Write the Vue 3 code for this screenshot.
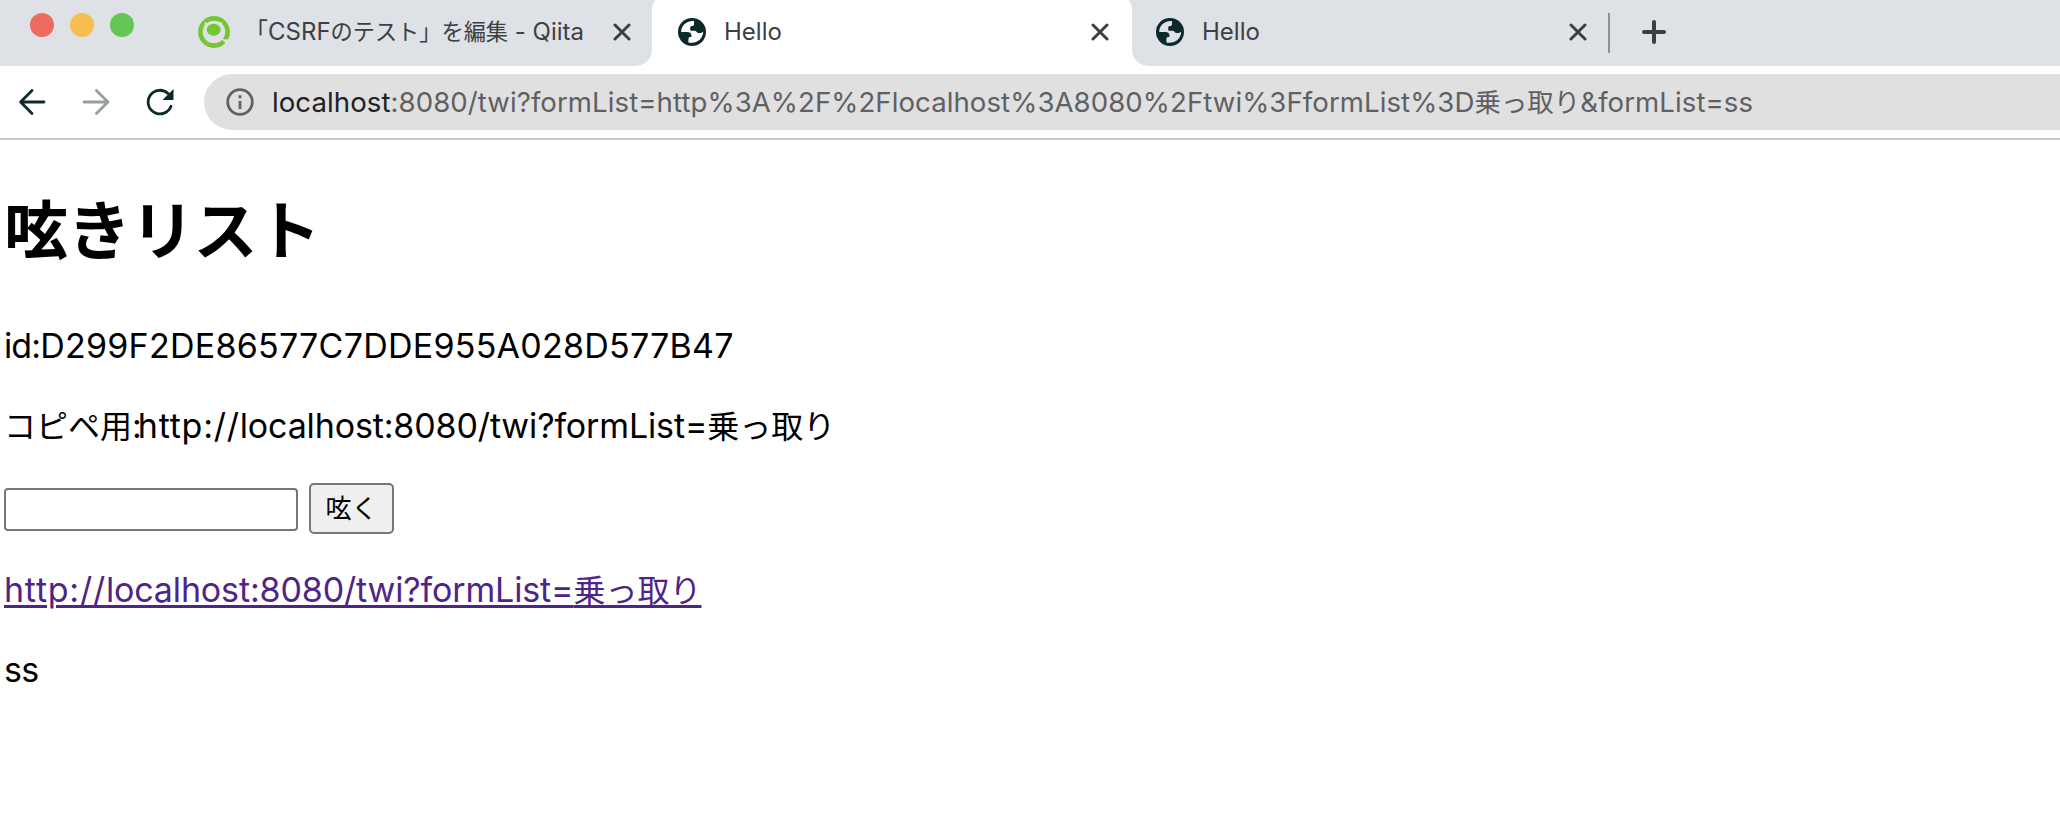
<script setup>
import { ref } from 'vue'

const tabs = ref([
  { id: 1, icon: 'qiita', active: false },
  { id: 2, icon: 'globe', title: 'Hello', active: true },
  { id: 3, icon: 'globe', title: 'Hello', active: false },
])

const sessionId = 'D299F2DE86577C7DDE955A028D577B47'
const scheme = 'http://'
const path = 'localhost:8080/twi?formList='
const word = '乗っ取り'
const tweet = ref('')
</script>

<template>
  <div class="window">
    <div class="tab-bar">
      <div class="lights">
        <span class="light red"></span>
        <span class="light yellow"></span>
        <span class="light green"></span>
      </div>
      <div v-for="tab in tabs" :key="tab.id" class="tab" :class="[tab.icon, { active: tab.active }]">
        <svg v-if="tab.icon === 'qiita'" class="favicon" width="32" height="32" viewBox="0 0 32 32">
          <circle cx="16" cy="16" r="13.6" fill="none" stroke="#76c533" stroke-width="4.6" />
          <path d="M23.4 22.4L26.2 23.2L32 23.6L32 27L28.4 27.4L25.2 25Z" fill="#dee1e6" />
          <path d="M7 5.4L10.4 8.2Q16 5.6 21 8.2L24 5.4L24.6 11.4H6.4Z" fill="#dee1e6" />
          <ellipse cx="15.7" cy="13.8" rx="7" ry="6.1" fill="#76c533" />
        </svg>
        <svg v-else class="favicon" width="28" height="28" viewBox="0 0 28 28">
          <circle cx="14" cy="14" r="14" fill="#0d2a2b" />
          <path class="land" d="M16 3C8.8 2.2 3 7.5 3.2 14H9.2C11.8 14 13.4 15 13.4 17.6V19H11.6Q10.4 19.4 10.4 21V24.4C17.5 26.4 25.2 21.5 25.2 13.6C23.6 15.2 21.5 15.4 19.6 14.8C18.4 14.4 18.4 12.8 16.4 12.8H13.2Q12.2 12.6 12.2 11.4V9.6Q12.2 8 13.8 8H14.6Q16 7.8 16 6.4Z" />
        </svg>
        <span v-if="tab.title" class="tab-title">{{ tab.title }}</span>
        <span v-else class="tab-title"><span class="kagi">「</span>CSRF<span class="jp">のテスト」を編集</span><span class="site"> - Qiita</span></span>
        <svg class="close" width="18" height="18" viewBox="0 0 18 18">
          <path d="M2 2L16 16M16 2L2 16" />
        </svg>
      </div>
      <div class="divider"></div>
      <svg class="plus" width="26" height="26" viewBox="0 0 26 26">
        <path d="M13 3V23M3 13H23" />
      </svg>
    </div>

    <div class="toolbar">
      <svg class="nav" width="28" height="28" viewBox="0 0 28 28">
        <path d="M26 14H3M14 2.6L2.6 14L14 25.4" />
      </svg>
      <svg class="nav forward" width="28" height="28" viewBox="0 0 28 28">
        <path d="M2 14H26M14.4 2.6L26 14L14.4 25.4" />
      </svg>
      <svg class="nav reload" width="28" height="28" viewBox="0 0 28 28">
        <path d="M25 18.2A11.8 11.8 0 1 1 22 5.4" />
        <path class="tip" d="M27.5 1V12H16.5Z" />
      </svg>
      <div class="omnibox">
        <svg class="info" width="28" height="28" viewBox="0 0 28 28">
          <circle cx="14" cy="14" r="12.3" />
          <path d="M14 13V21M14 7.2V10.2" />
        </svg>
        <span class="url"><span class="host">localhost</span>:8080/twi?formList=http%3A%2F%2Flocalhost%3A8080%2Ftwi%3FformList%3D<span class="jp">{{ word }}</span>&amp;formList=ss</span>
      </div>
    </div>

    <div class="page">
      <h1>呟きリスト</h1>
      <p><span class="label">id:</span><span class="session">{{ sessionId }}</span></p>
      <p><span class="jp">コピペ用</span><span class="colon">:</span><span class="scheme">{{ scheme }}</span><span class="path">{{ path }}</span><span class="jp">{{ word }}</span></p>
      <form @submit.prevent>
        <input v-model="tweet" type="text" />
        <button type="submit">呟く</button>
      </form>
      <p><a href="#"><span class="scheme">{{ scheme }}</span><span class="path">{{ path }}</span><span class="jp">{{ word }}</span></a></p>
      <p class="tweet">ss</p>
    </div>
  </div>
</template>

<style>
body {
  margin: 0;
  overflow: hidden;
}
</style>

<style scoped>
.window {
  height: 820px;
  overflow: hidden;
  background: #fff;
  font-family: Inter, "Noto Sans CJK JP", sans-serif;
}
.tab-bar {
  display: flex;
  align-items: center;
  height: 66px;
  background: #dee1e6;
}
.lights {
  display: flex;
  gap: 16px;
  width: 144px;
  padding-left: 30px;
  margin-bottom: 16px;
}
.light {
  width: 24px;
  height: 24px;
  border-radius: 50%;
}
.red {
  background: #ed6b60;
}
.yellow {
  background: #f5be4f;
}
.green {
  background: #62c554;
}
.tab {
  box-sizing: border-box;
  display: flex;
  align-items: center;
  width: 478px;
  height: 66px;
  padding: 0 23px 2px 24px;
  color: #3c4043;
  font-size: 24px;
}
.tab.active {
  position: relative;
  width: 480px;
  height: 72px;
  margin-top: -6px;
  padding: 4px 23px 0 26px;
  border-radius: 16px 16px 0 0;
  background: #fff;
}
.tab.active::before,
.tab.active::after {
  content: "";
  position: absolute;
  bottom: 0;
  width: 16px;
  height: 16px;
}
.tab.active::before {
  left: -16px;
  background: radial-gradient(circle at 0 0, transparent 15.5px, #fff 16px);
}
.tab.active::after {
  right: -16px;
  background: radial-gradient(circle at 100% 0, transparent 15.5px, #fff 16px);
}
.tab.qiita {
  padding-right: 21px;
}
.favicon {
  flex: none;
}
.land {
  fill: #fff;
}
.tab:not(.active) .land {
  fill: #dee1e6;
}
.tab-title {
  margin-left: 18px;
  line-height: 40px;
  white-space: nowrap;
}
.qiita .tab-title {
  margin-left: 26px;
}
.kagi {
  margin-left: -12px;
}
.tab-title .jp {
  font-size: 22.2px;
}
.close {
  flex: none;
  margin-left: auto;
}
.close path,
.plus path {
  fill: none;
  stroke: #3c4043;
  stroke-width: 3;
  stroke-linecap: round;
}
.plus path {
  stroke-width: 4;
}
.divider {
  width: 2px;
  height: 40px;
  margin-left: -2px;
  background: #8c9094;
}
.plus {
  margin: 0 0 2px 31px;
}
.toolbar {
  display: flex;
  align-items: center;
  height: 72px;
  padding-left: 18px;
  border-bottom: 2px solid #c5cccb;
}
.nav {
  flex: none;
  margin-right: 36px;
}
.nav path {
  fill: none;
  stroke: #0d2a2b;
  stroke-width: 2.8;
  stroke-linecap: round;
  stroke-linejoin: round;
}
.nav.forward path {
  stroke: #94a0a0;
}
.nav.reload {
  margin-right: 30px;
}
.nav.reload .tip {
  fill: #0d2a2b;
  stroke: none;
}
.omnibox {
  display: flex;
  flex: 1;
  align-items: center;
  height: 56px;
  padding-left: 22px;
  border-radius: 28px 0 0 28px;
  background: #e0e0e0;
}
.info {
  flex: none;
  fill: none;
  stroke: #5f6368;
  stroke-width: 2.8;
}
.url {
  margin-left: 18px;
  color: #5f6063;
  font-size: 27.6px;
  line-height: 40px;
  letter-spacing: 0.07px;
  white-space: nowrap;
}
.url .jp {
  font-size: 26.4px;
}
.host {
  color: #202124;
}
.page {
  padding: 0 4px;
  color: #000;
  font-size: 34px;
}
.page .jp {
  font-size: 32px;
  line-height: 1;
}
h1 {
  margin: 43px 0;
  font-size: 64px;
  line-height: 96px;
  letter-spacing: -0.8px;
}
p {
  height: 48px;
  margin: 32px 0;
  line-height: 48px;
  white-space: nowrap;
}
h1 + p {
  margin-top: 0;
}
.label {
  letter-spacing: -0.9px;
}
.session {
  letter-spacing: 0.25px;
}
.colon {
  letter-spacing: -4px;
}
.scheme {
  letter-spacing: 0.75px;
}
.path {
  letter-spacing: -0.14px;
}
.tweet {
  letter-spacing: -0.7px;
}
form {
  display: flex;
  align-items: center;
  gap: 11px;
  height: 52px;
}
input {
  box-sizing: border-box;
  width: 294px;
  height: 43px;
  margin: 3px 0 0;
  border: 2px solid #767676;
  border-radius: 4px;
  background: #fff;
  font-size: 26px;
}
button {
  box-sizing: border-box;
  width: 85px;
  height: 51px;
  padding: 0 0 2px;
  border: 2px solid #767676;
  border-radius: 5px;
  background: #efefef;
  color: #000;
  font-family: "Noto Sans CJK JP", sans-serif;
  font-size: 26px;
  line-height: 40px;
}
a {
  color: #4f2488;
  text-decoration: underline;
  text-decoration-thickness: 3px;
  text-underline-offset: 3px;
}
</style>
